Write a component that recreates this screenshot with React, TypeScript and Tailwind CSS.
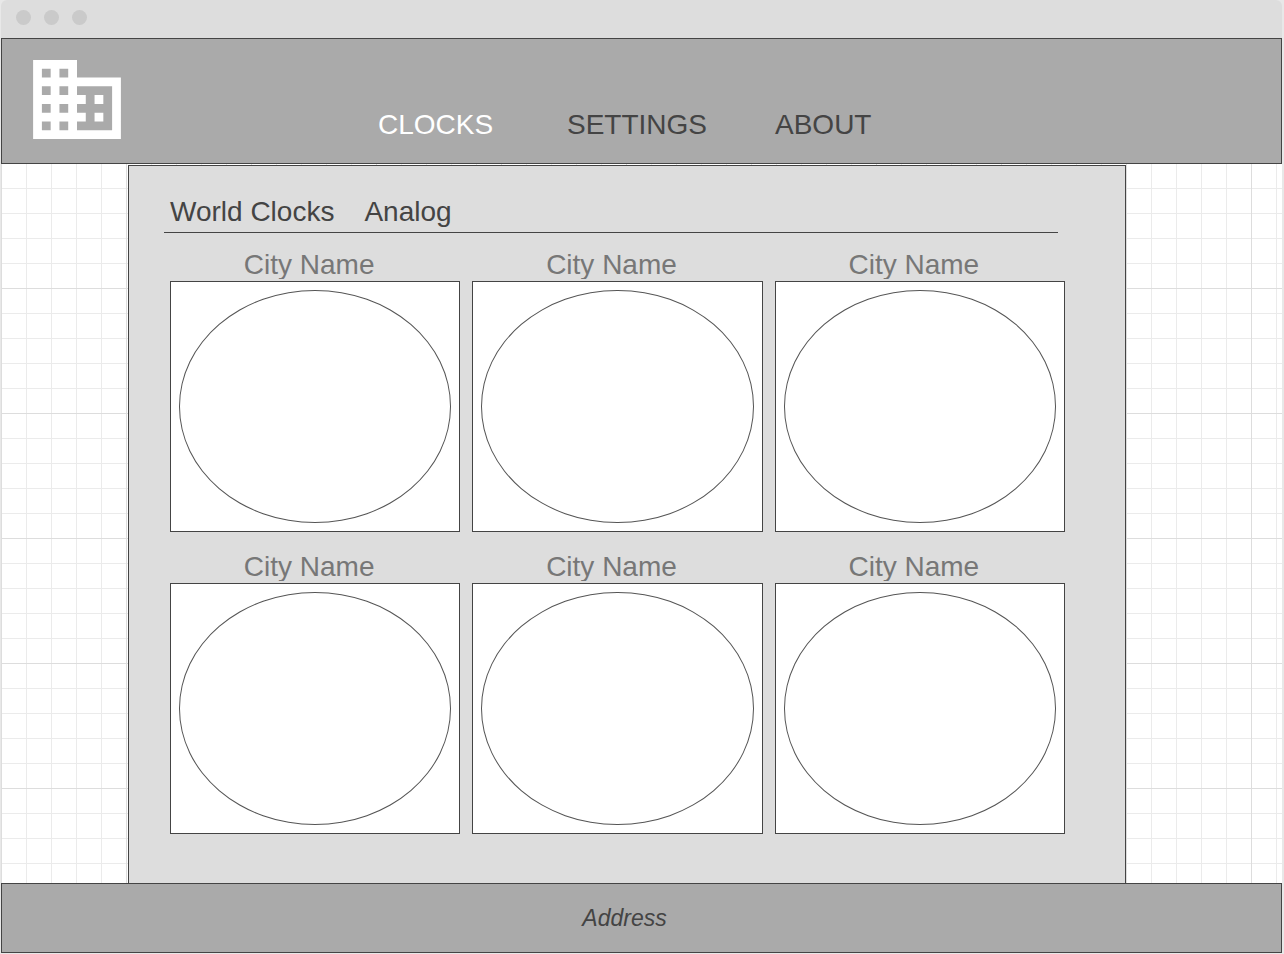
import React from "react";

type Clock = { id: number; city: string };

const clocks: Clock[] = [1, 2, 3, 4, 5, 6].map((id) => ({ id, city: "City Name" }));

function BuildingIcon() {
  return (
    <svg viewBox="2 3 20 18" className="h-[79px] w-[88px] shrink-0 fill-white" aria-hidden="true">
      <path d="M12 7V3H2v18h20V7H12zM6 19H4v-2h2v2zm0-4H4v-2h2v2zm0-4H4V9h2v2zm0-4H4V5h2v2zm4 12H8v-2h2v2zm0-4H8v-2h2v2zm0-4H8V9h2v2zm0-4H8V5h2v2zm10 12h-8v-2h2v-2h-2v-2h2v-2h-2V9h8v10zm-2-8h-2v2h2v-2zm0 4h-2v2h2v-2z" />
    </svg>
  );
}

function TitleBar() {
  return (
    <div className="flex h-[38px] shrink-0 items-center gap-[13px] rounded-t-md bg-[#dddddd] pb-1 pl-[15px]">
      <span className="size-[15px] rounded-full bg-[#cacaca]" />
      <span className="size-[15px] rounded-full bg-[#cacaca]" />
      <span className="size-[15px] rounded-full bg-[#cacaca]" />
    </div>
  );
}

function Header() {
  return (
    <header className="flex shrink-0 items-start border border-[#444444] bg-[#aaaaaa] pt-[21px] pb-[22px] pl-[31px]">
      <BuildingIcon />
      <nav className="ml-[257px] grid grid-cols-[189px_208px_auto] pt-[49px] text-[28px] leading-8">
        <a href="#clocks" className="text-white">CLOCKS</a>
        <a href="#settings">SETTINGS</a>
        <a href="#about">ABOUT</a>
      </nav>
    </header>
  );
}

function ClockCard({ city }: { city: string }) {
  return (
    <article>
      <h2 className="mb-0.5 h-[30px] overflow-hidden pr-3 text-center text-[28px] leading-8 text-[#777777]">
        {city}
      </h2>
      <div className="h-[251px] border border-[#444444] bg-white p-2">
        <div className="h-full rounded-[50%] border border-[#555555]" />
      </div>
    </article>
  );
}

export default function App() {
  return (
    <div className="flex min-h-screen flex-col bg-[#e8e8e8] pr-0.5 pb-px pl-px font-['Liberation_Sans',Arial,sans-serif] text-[#444444]">
      <TitleBar />
      <Header />
      <main className="flex grow bg-white bg-[linear-gradient(to_right,#dddddd_1px,transparent_1px),linear-gradient(to_bottom,transparent_124px,#dddddd_124px),linear-gradient(to_right,#ebebeb_1px,transparent_1px),linear-gradient(to_bottom,transparent_24px,#ebebeb_24px)] bg-[size:125px_125px,125px_125px,25px_25px,25px_25px] pt-px pr-[156px] pl-[127px]">
        <section className="grow border border-b-0 border-[#444444] bg-[#dddddd] pt-[30px]">
          <div className="mr-[67px] ml-[35px] flex gap-[30px] border-b border-[#444444] pb-1 pl-1.5 text-[28px] leading-8">
            <h1>World Clocks</h1>
            <span>Analog</span>
          </div>
          <div className="mt-4 mr-[60px] ml-[41px] grid grid-cols-3 gap-x-3 gap-y-[19px]">
            {clocks.map((clock) => (
              <ClockCard key={clock.id} city={clock.city} />
            ))}
          </div>
        </section>
      </main>
      <footer className="flex h-[70px] shrink-0 items-center justify-center border border-[#444444] bg-[#aaaaaa] pr-[34px]">
        <address className="text-[23px] leading-7 italic">Address</address>
      </footer>
    </div>
  );
}
